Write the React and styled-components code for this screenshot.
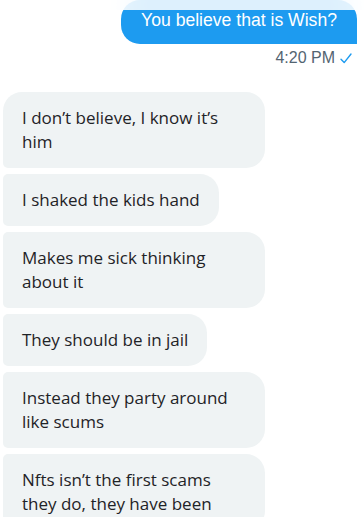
import React from "react";
import styled, { createGlobalStyle } from "styled-components";

const GlobalStyle = createGlobalStyle`
  html, body {
    margin: 0;
    padding: 0;
    background: #ffffff;
  }
  body {
    font-family: "Open Sans", "Noto Sans", sans-serif;
  }
`;

const Page = styled.div`
  position: relative;
  width: 364px;
  height: 517px;
  overflow: hidden;
  background: #ffffff;
`;

const HeaderFade = styled.div`
  position: absolute;
  top: -40px;
  left: 0;
  right: 0;
  height: 50px;
  background: rgba(255, 255, 255, 0.85);
  backdrop-filter: blur(12px);
  z-index: 2;
`;

const Thread = styled.div`
  display: flex;
  flex-direction: column;
  padding: 0 7px 0 3px;
`;

const SentGroup = styled.div`
  display: flex;
  flex-direction: column;
  align-items: flex-end;
`;

const SentBubble = styled.div`
  background: #1d9bf0;
  color: #ffffff;
  font-family: "Liberation Sans", Arial, sans-serif;
  font-size: 17.6px;
  line-height: 24px;
  padding: 8px 20px 12px;
  border-radius: 19px 19px 0 19px;
`;

const Meta = styled.div`
  display: flex;
  align-items: center;
  gap: 5px;
  margin-top: 4px;
  margin-right: 5px;
  font-family: "Liberation Sans", Arial, sans-serif;
  font-size: 16px;
  line-height: 20px;
  color: #536471;
`;

const ReceivedGroup = styled.div`
  display: flex;
  flex-direction: column;
  align-items: flex-start;
  gap: 6px;
  margin-top: 24px;
`;

const ReceivedBubble = styled.div`
  box-sizing: border-box;
  max-width: 262px;
  background: #eff3f4;
  color: #1f2327;
  font-size: 17px;
  line-height: 24px;
  padding: 14px 19px;
  border-radius: ${(p) => (p.$first ? "19px" : "5px")} 19px 19px 5px;
`;

const messages = [
  "I don’t believe, I know it’s him",
  "I shaked the kids hand",
  "Makes me sick thinking about it",
  "They should be in jail",
  "Instead they party around like scums",
  "Nfts isn’t the first scams they do, they have been",
];

function Check() {
  return (
    <svg width="12" height="11" viewBox="0 0 12 11" fill="none">
      <path d="M1 6.2 L4.2 9.6 L11 1" stroke="#1d9bf0" strokeWidth="1.4" strokeLinecap="round" strokeLinejoin="round" />
    </svg>
  );
}

export default function App() {
  return (
    <Page>
      <GlobalStyle />
      <HeaderFade />
      <Thread>
        <SentGroup>
          <SentBubble>You believe that is Wish?</SentBubble>
          <Meta>
            <span>4:20 PM</span>
            <Check />
          </Meta>
        </SentGroup>
        <ReceivedGroup>
          {messages.map((text, i) => (
            <ReceivedBubble key={i} $first={i === 0}>
              {text}
            </ReceivedBubble>
          ))}
        </ReceivedGroup>
      </Thread>
    </Page>
  );
}
